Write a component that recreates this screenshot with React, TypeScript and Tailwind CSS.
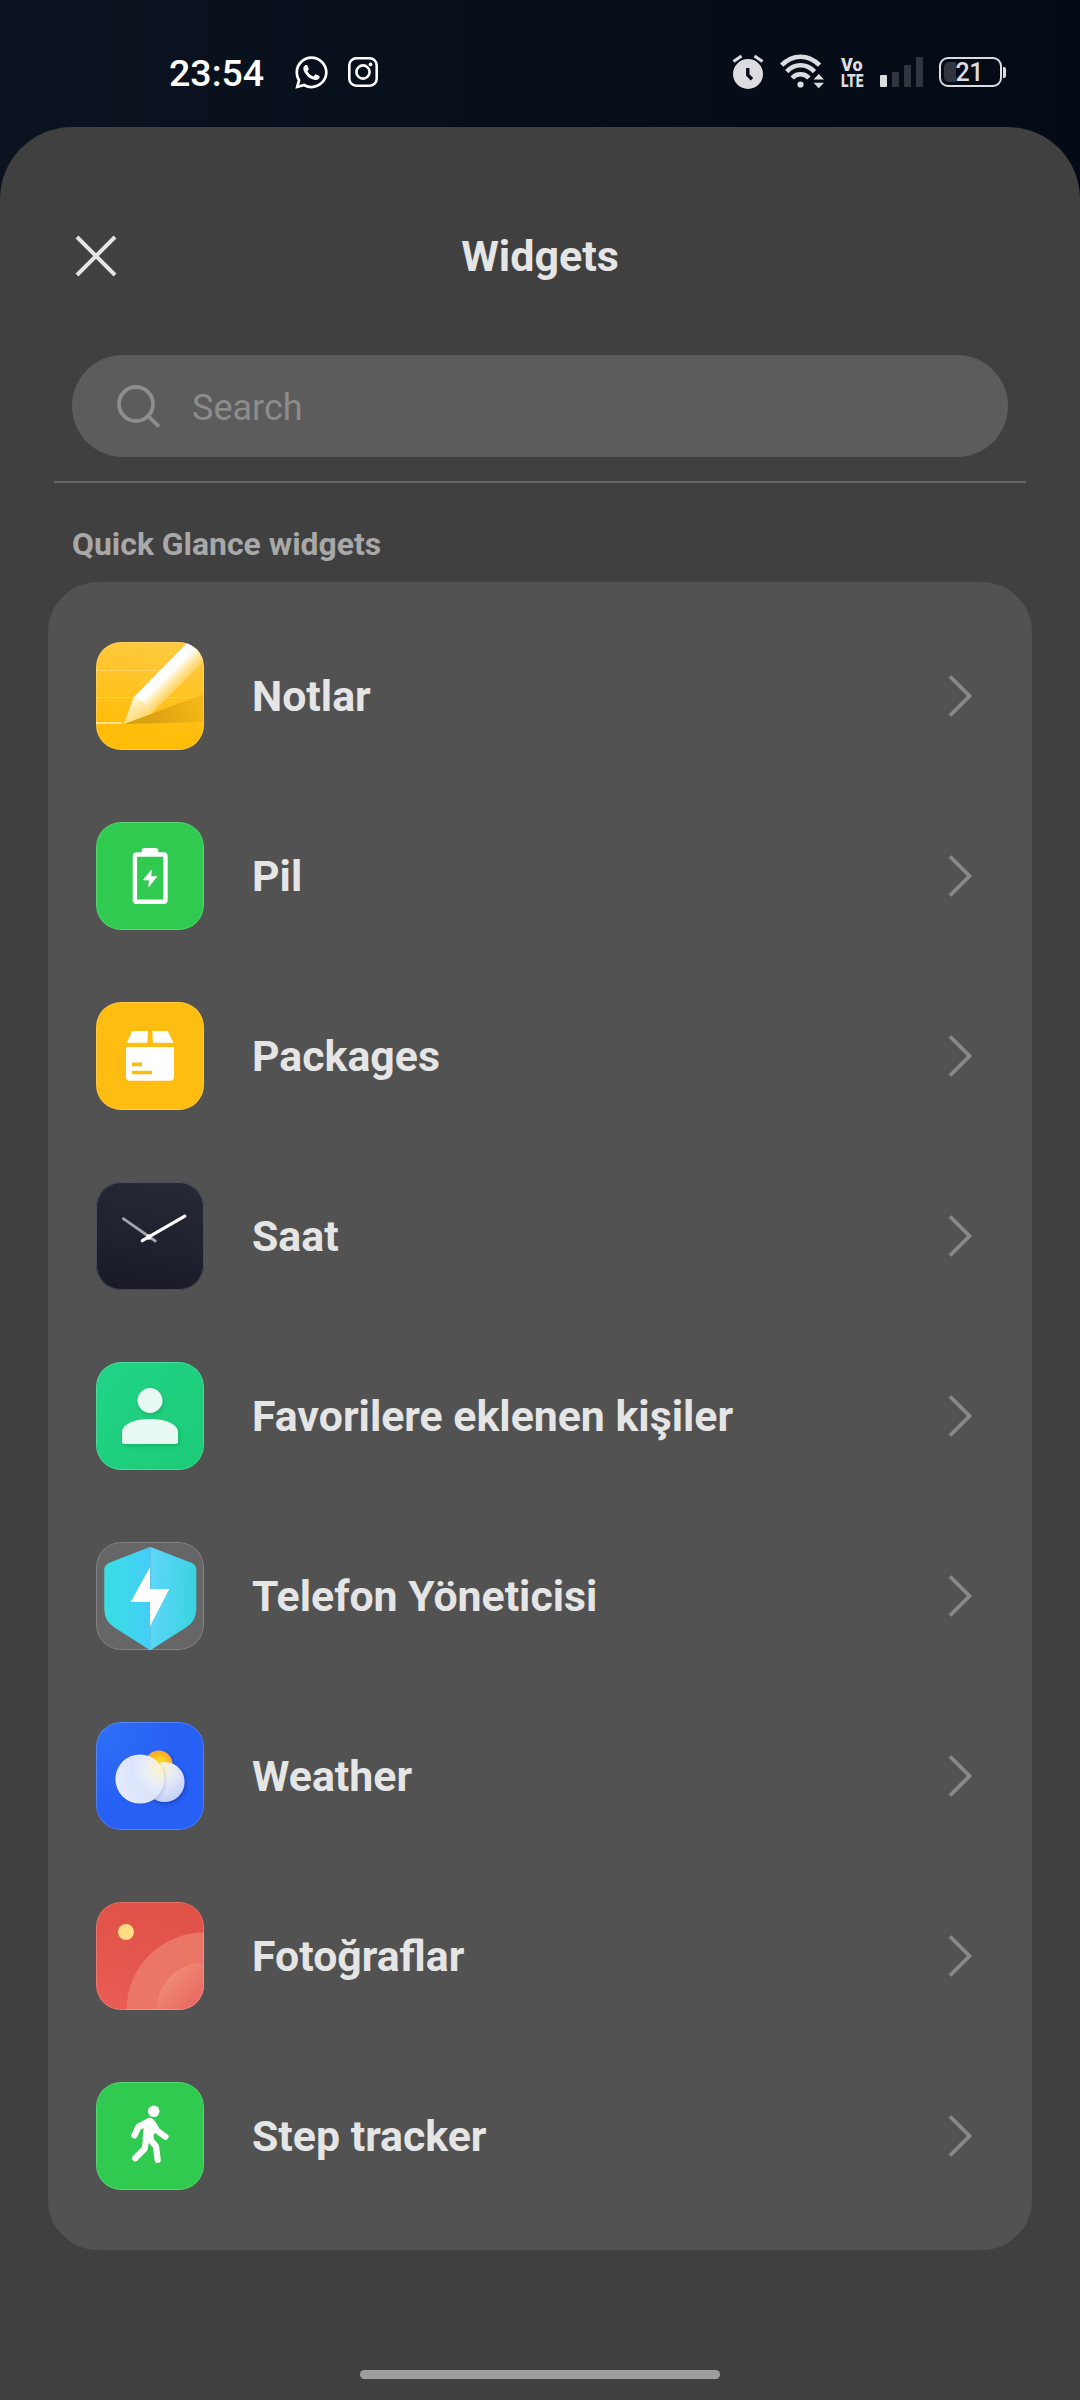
import React from 'react';
import { FaWhatsapp } from 'react-icons/fa';

const NotesIcon = () => (
  <>
    <defs>
      <linearGradient id="notesBg" x1="0.6" y1="0" x2="0.4" y2="1">
        <stop offset="0" stopColor="#ffca40" />
        <stop offset="0.85" stopColor="#ffbc08" />
      </linearGradient>
      <linearGradient id="pencil" gradientUnits="userSpaceOnUse" x1="64" y1="28" x2="82" y2="46">
        <stop offset="0.35" stopColor="#fff" />
        <stop offset="0.7" stopColor="#ffe394" />
        <stop offset="1" stopColor="#ffd05a" />
      </linearGradient>
      <linearGradient id="pencilTip" gradientUnits="userSpaceOnUse" x1="40" y1="58" x2="52" y2="76">
        <stop offset="0" stopColor="#fff3cc" />
        <stop offset="1" stopColor="#ffd35f" />
      </linearGradient>
      <linearGradient id="pencilShade" gradientUnits="userSpaceOnUse" x1="50" y1="72" x2="108" y2="62">
        <stop offset="0" stopColor="#d9a010" />
        <stop offset="1" stopColor="#d9a010" stopOpacity="0.25" />
      </linearGradient>
    </defs>
    <rect width="108" height="108" fill="url(#notesBg)" />
    <path d="M0 28.5H66M0 55.5H98" stroke="#ffd25c" strokeWidth="1" />
    <path d="M0 81H26" stroke="#ffe08a" strokeWidth="2" />
    <path d="M28 82L108 52V80Z" fill="url(#pencilShade)" />
    <path d="M37.5 55.5L92 0H108V19L55 72Z" fill="url(#pencil)" />
    <path d="M28 82L37.5 55.5C44 56 50 62 55 72Z" fill="url(#pencilTip)" />
  </>
);

const BatteryIcon = () => (
  <>
    <rect width="108" height="108" fill="#2fca4f" />
    <rect x="45.7" y="26" width="16.6" height="8" rx="2.5" fill="#fff" />
    <rect x="38.9" y="32.5" width="30.6" height="47.3" rx="1.8" fill="#2fca4f" stroke="#fff" strokeWidth="4.4" />
    <path d="M55.3 48L47.3 58H53.3L52.6 65L61 54.4H55Z" fill="#fff" stroke="#fff" strokeWidth="0.6" strokeLinejoin="round" />
  </>
);

const PackagesIcon = () => (
  <>
    <rect width="108" height="108" fill="#ffbc11" />
    <path d="M37.5 29H52L51.3 40.7H30.7L35.7 30.3Q36.3 29 37.5 29ZM56.3 29H70.5Q71.7 29 72.3 30.3L77.4 40.7H57Z" fill="#fff" />
    <path d="M31 45H77Q78 45 78 46V74.7Q78 78.7 74 78.7H34Q30 78.7 30 74.7V46Q30 45 31 45Z" fill="#fff" />
    <path d="M36 62.4H46M36 70.5H56" stroke="#ffbc11" strokeWidth="3.6" />
  </>
);

const ClockIcon = () => (
  <>
    <defs>
      <linearGradient id="clockBg" x1="0.6" y1="0" x2="0.4" y2="1">
        <stop offset="0" stopColor="#242934" />
        <stop offset="0.6" stopColor="#1e222e" />
        <stop offset="1" stopColor="#191b27" />
      </linearGradient>
    </defs>
    <rect width="108" height="108" fill="url(#clockBg)" />
    <path d="M27.3 36.7L59.3 59" stroke="#a3a5ab" strokeWidth="2.8" strokeLinecap="round" />
    <path d="M46.3 58.7L88.8 34.2" stroke="#fff" strokeWidth="3.2" strokeLinecap="round" />
    <circle cx="52.8" cy="55" r="2.7" fill="#fff" />
  </>
);

const ContactsIcon = () => (
  <>
    <defs>
      <linearGradient id="contactsBg" x1="0" y1="0" x2="1" y2="1">
        <stop offset="0" stopColor="#21d488" />
        <stop offset="1" stopColor="#1ccb76" />
      </linearGradient>
    </defs>
    <rect width="108" height="108" fill="url(#contactsBg)" />
    <g fill="#e7f9f0" className="drop-shadow-[1px_2px_2px_rgba(0,90,50,0.25)]">
      <circle cx="54" cy="38.5" r="12.5" />
      <path d="M26 80V70C26 61.5 40 57 54 57S82 61.5 82 70V80A2 2 0 0 1 80 82H28A2 2 0 0 1 26 80Z" />
    </g>
  </>
);

const ShieldIcon = () => (
  <>
    <defs>
      <linearGradient id="shieldLeft" x1="0" y1="0.6" x2="1" y2="0.5">
        <stop offset="0" stopColor="#38dfe1" />
        <stop offset="1" stopColor="#45cdf8" />
      </linearGradient>
      <linearGradient id="shieldRight" x1="0" y1="0.5" x2="1" y2="0.6">
        <stop offset="0" stopColor="#5ed6f8" />
        <stop offset="1" stopColor="#38d3e0" />
      </linearGradient>
    </defs>
    <rect width="108" height="108" fill="#666" />
    <path d="M54.2 5Q53.4 5 52.5 5.4L13.3 20.7Q8.3 22.8 8.3 28V67Q8.3 79 18.5 85.5L52.5 107.3Q53.5 108 54.2 108Z" fill="url(#shieldLeft)" />
    <path d="M54.2 5Q55 5 55.9 5.4L95.3 20.7Q100.3 22.8 100.3 28V67Q100.3 79 90 85.5L55.9 107.3Q55 108 54.2 108Z" fill="url(#shieldRight)" />
    <path d="M54 25L34.7 60H54V84.3L73.3 47H54Z" fill="#fff" />
  </>
);

const WeatherIcon = () => (
  <>
    <defs>
      <radialGradient id="weatherBg" cx="0" cy="0" r="0.75">
        <stop offset="0" stopColor="#2f70f6" />
        <stop offset="1" stopColor="#2760f4" />
      </radialGradient>
      <radialGradient id="sun" cx="0.5" cy="0.55" r="0.5">
        <stop offset="0.3" stopColor="#ffdf1c" />
        <stop offset="1" stopColor="#fbab2c" />
      </radialGradient>
      <radialGradient id="cloudSmall" gradientUnits="userSpaceOnUse" cx="63" cy="46" r="38">
        <stop offset="0" stopColor="#fff3b8" />
        <stop offset="0.4" stopColor="#e9ecf8" />
        <stop offset="1" stopColor="#bccbf8" />
      </radialGradient>
      <radialGradient id="cloudBig" gradientUnits="userSpaceOnUse" cx="66" cy="46" r="50">
        <stop offset="0" stopColor="#fff4c4" />
        <stop offset="0.35" stopColor="#e9edfa" />
        <stop offset="0.6" stopColor="#dbe4fb" />
        <stop offset="1" stopColor="#e4ebfc" />
      </radialGradient>
    </defs>
    <rect width="108" height="108" fill="url(#weatherBg)" />
    <g className="drop-shadow-[1px_2px_2px_rgba(10,30,120,0.4)]">
      <circle cx="62.7" cy="42.2" r="13.8" fill="url(#sun)" />
      <circle cx="68.6" cy="60" r="20" fill="url(#cloudSmall)" />
    </g>
    <circle cx="44" cy="57" r="24.6" fill="url(#cloudBig)" className="drop-shadow-[1px_1px_1px_rgba(30,60,160,0.2)]" />
  </>
);

const PhotosIcon = () => (
  <>
    <defs>
      <linearGradient id="photosBg" x1="0.6" y1="0" x2="0.4" y2="1">
        <stop offset="0" stopColor="#e05147" />
        <stop offset="1" stopColor="#e85c53" />
      </linearGradient>
      <linearGradient id="photosArc" gradientUnits="userSpaceOnUse" x1="74" y1="74" x2="104" y2="104">
        <stop offset="0" stopColor="#ee8a74" />
        <stop offset="1" stopColor="#e96560" />
      </linearGradient>
    </defs>
    <rect width="108" height="108" fill="url(#photosBg)" />
    <circle cx="108" cy="108" r="77.5" fill="#ea7665" />
    <circle cx="108" cy="108" r="47.5" fill="url(#photosArc)" />
    <circle cx="30" cy="30" r="8" fill="#ffdb82" />
  </>
);

const StepsIcon = () => (
  <>
    <rect width="108" height="108" fill="#2fca4f" />
    <circle cx="57.7" cy="29.3" r="5.8" fill="#fff" />
    <path d="M52 35.9Q56 35 58.3 39L62.5 46.5L57.5 53L58 57.5L49 64L46.5 57L47.7 46L42 48.5L40.5 42.5Z" fill="#fff" />
    <g fill="none" stroke="#fff" strokeWidth="6.2" strokeLinecap="round" strokeLinejoin="round">
      <path d="M53.5 39.2L42.5 44.8L38.4 53.4" />
      <path d="M56 40.5L61.2 48.7L69.5 54.7" />
      <path d="M50.2 57L48.6 66.7L39.2 76.2" />
      <path d="M53 56L60 64.5L61.7 78" />
    </g>
  </>
);

const widgets = [
  { name: 'Notlar', art: <NotesIcon /> },
  { name: 'Pil', art: <BatteryIcon /> },
  { name: 'Packages', art: <PackagesIcon /> },
  { name: 'Saat', art: <ClockIcon /> },
  { name: 'Favorilere eklenen kişiler', art: <ContactsIcon /> },
  { name: 'Telefon Yöneticisi', art: <ShieldIcon /> },
  { name: 'Weather', art: <WeatherIcon /> },
  { name: 'Fotoğraflar', art: <PhotosIcon /> },
  { name: 'Step tracker', art: <StepsIcon /> },
];

const StatusBar: React.FC = () => (
  <header className="flex h-[127px] items-start justify-between pt-[54px] pl-[169px] pr-[74.5px] text-[#dcdde0]">
    <div className="flex h-9 items-center text-white">
      <span className="w-[124px] pt-0.5 text-[37.5px] font-medium leading-9">23:54</span>
      <FaWhatsapp className="size-[37px]" />
      <svg className="ml-[17px] size-[32px]" viewBox="0 0 32 32" fill="none" stroke="currentColor" strokeWidth="2.6">
        <rect x="2.3" y="2.3" width="27.4" height="27.4" rx="7" />
        <circle cx="16" cy="16" r="6.6" />
        <circle cx="23.6" cy="8.4" r="1.9" fill="currentColor" stroke="none" />
      </svg>
    </div>

    <div className="flex h-9 items-center">
      <svg className="h-9 w-[32px]" viewBox="0 0 32 36">
        <circle cx="16" cy="20" r="15" fill="currentColor" />
        <path d="M1.5 7.5L9.5 2M22.5 2L30.5 7.5" stroke="currentColor" strokeWidth="3.2" />
        <path d="M15.8 14V21L20 25.2" fill="none" stroke="#080d17" strokeWidth="3.4" />
      </svg>
      <svg className="ml-4 h-9 w-[45px]" viewBox="0 0 45 36" fill="none" stroke="currentColor" strokeWidth="4.6">
        <path d="M1.6 11.2Q10 2.7 20.5 2.7T39.6 11.2" />
        <path d="M6.8 17.6Q12.5 11.3 20.5 11.3T34.5 17.6" />
        <path d="M12.2 24Q15.5 20.3 20.5 20.3T28.9 24" />
        <circle cx="20.5" cy="30.5" r="3.1" fill="currentColor" stroke="none" />
        <path d="M38.8 20L44 25.6H33.6ZM38.8 34.2L44 28.7H33.6Z" fill="currentColor" stroke="none" />
      </svg>
      {/* the two lines sit tighter than the font's own line height */}
      <svg className="ml-[16px] h-9 w-6 overflow-visible" viewBox="0 0 24 36" fill="currentColor" fontFamily="Roboto, sans-serif" fontSize="19.2" fontWeight="900">
        <text x="0" y="17" textLength="21.5" lengthAdjust="spacingAndGlyphs">Vo</text>
        <text x="0" y="32.5" textLength="22.5" lengthAdjust="spacingAndGlyphs">LTE</text>
      </svg>
      <div className="ml-[15px] flex h-[30px] items-end gap-[5px]">
        <span className="h-3 w-[7px] rounded-[1px] bg-[#dcdde0]" />
        <span className="h-[15px] w-[7px] rounded-[1px] bg-[#31363e]" />
        <span className="h-[22px] w-[7px] rounded-[1px] bg-[#31363e]" />
        <span className="h-[30px] w-[7px] rounded-[1px] bg-[#31363e]" />
      </div>
      <div className="ml-4 flex h-[30px] w-[63px] items-center rounded-[9px] border-2 border-[#dcdde0] p-[3px]">
        <span className="h-5 w-3 shrink-0 rounded-l-[5px] bg-[#31363e]" />
        <span className="pt-0.5 text-[25px] font-medium leading-6 tracking-[-0.5px]">21</span>
      </div>
      <span className="ml-px h-[11px] w-[3px] rounded-r-[2px] bg-[#dcdde0]" />
    </div>
  </header>
);

const App: React.FC = () => {
  return (
    <div className="h-[2400px] w-[1080px] overflow-hidden bg-linear-to-r from-[#0b1320] to-[#050b15] font-[Roboto,sans-serif]">
      <StatusBar />

      <main className="flex h-[2273px] flex-col rounded-t-[72px] bg-[#404040] px-12">
        <div className="grid h-[228px] grid-cols-[96px_1fr_96px] items-center pt-[30px]">
          <button aria-label="Close" className="ml-[27px] w-[42px]">
            <svg className="size-[42px]" viewBox="0 0 42 42" stroke="#e5e5e5" strokeWidth="4">
              <path d="M2 2L40 40M40 2L2 40" />
            </svg>
          </button>
          <h1 className="text-center text-[43px] font-bold leading-[50px] text-[#e5e5e5]">Widgets</h1>
        </div>

        <div className="mx-6 flex h-[102px] shrink-0 items-center rounded-full bg-[#5c5c5c] pl-[44px]">
          <svg className="size-[46px]" viewBox="0 0 46 46" fill="none" stroke="#8e8e8e" strokeWidth="3.8">
            <circle cx="20" cy="21" r="17" />
            <path d="M32 33L43 43.5" />
          </svg>
          <span className="ml-[30px] pt-1 text-[36px] leading-[44px] text-[#8c8c8c]">Search</span>
        </div>

        <hr className="mx-1.5 mt-6 h-0.5 shrink-0 border-0 bg-[#666]" />

        <h2 className="mt-[41px] ml-6 text-[31.9px] font-bold leading-[40px] text-[#a8a8a8]">Quick Glance widgets</h2>

        <ul className="mt-[18px] rounded-[50px] bg-[#525252] py-6">
          {widgets.map((widget) => (
            <li key={widget.name} className="flex h-[180px] items-center pl-12 pr-[58.5px]">
              <div className="relative size-[108px] overflow-hidden rounded-[25px]">
                <svg className="size-full" viewBox="0 0 108 108">{widget.art}</svg>
                <div className="absolute inset-0 rounded-[25px] border border-white/20" />
              </div>
              <span className="ml-12 text-[42.8px] font-bold leading-[50px] text-[#e5e5e5]">{widget.name}</span>
              <svg className="ml-auto h-[42px] w-[26px]" viewBox="0 0 26 42" fill="none" stroke="#898989" strokeWidth="3.8">
                <path d="M2 1.5L21.5 21L2 40.5" />
              </svg>
            </li>
          ))}
        </ul>

        <div className="mx-auto mt-[120px] h-[9px] w-[360px] shrink-0 rounded-full bg-[#9e9e9e]" />
      </main>
    </div>
  );
};

export default App;
